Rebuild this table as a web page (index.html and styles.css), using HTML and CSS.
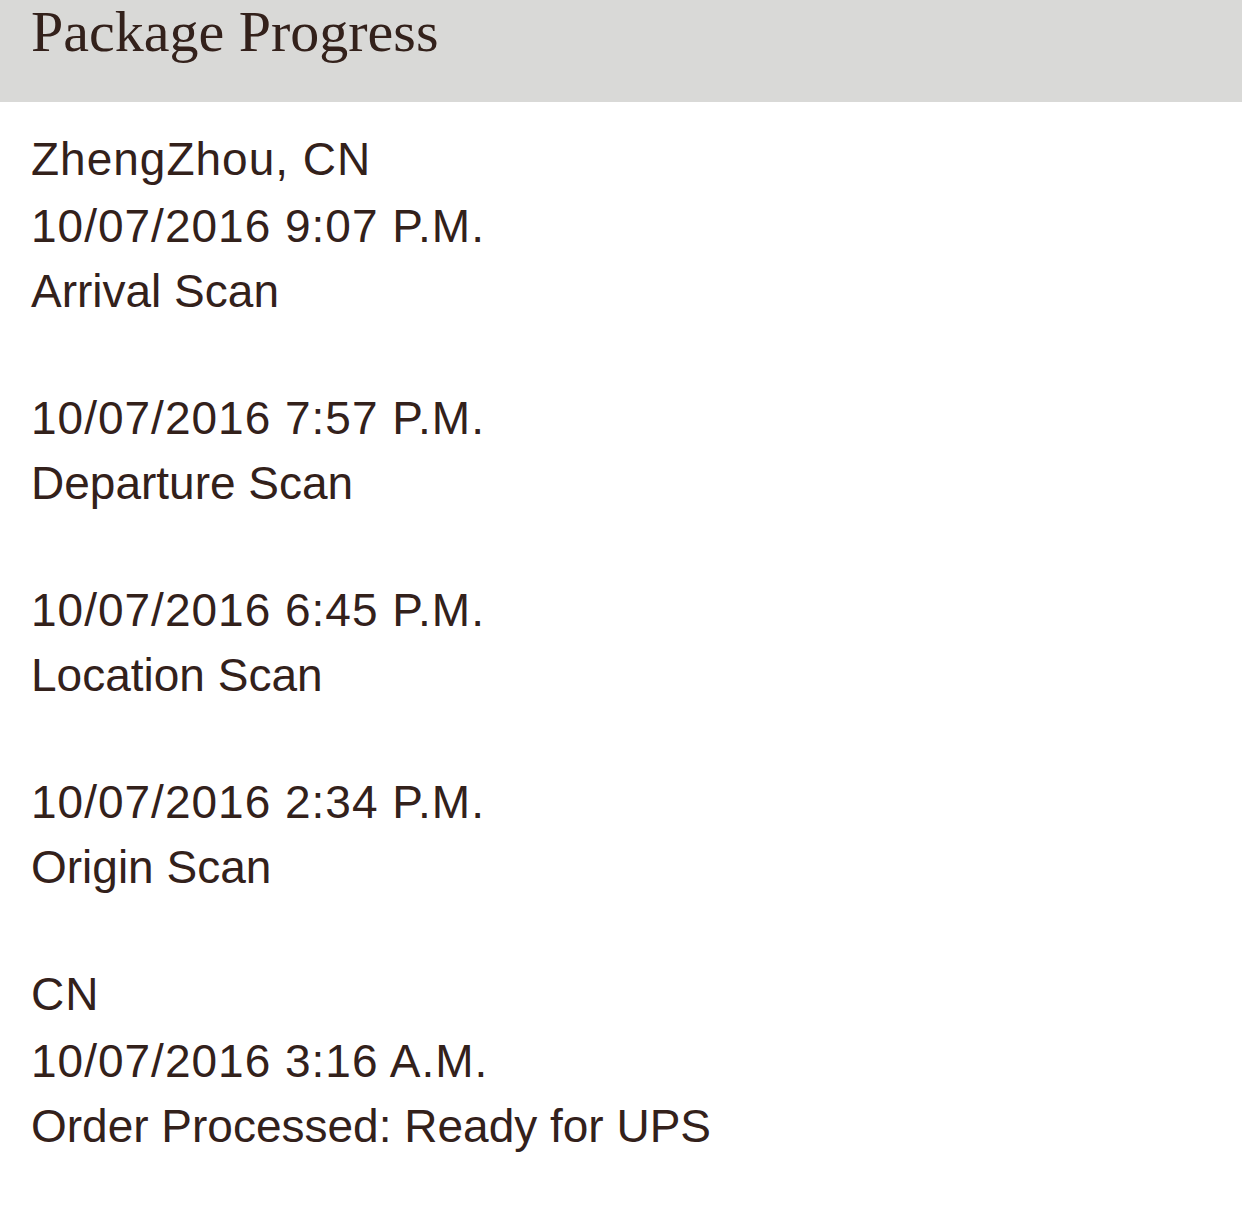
FILE: index.html
```html
<!DOCTYPE html>
<html>
<head>
<meta charset="utf-8">
<link rel="stylesheet" href="styles.css">
</head>
<body>
<header class="bar"><h1 class="title">Package Progress</h1></header>
<main class="progress">
  <section class="group">
    <div class="loc">ZhengZhou, CN</div>
    <div class="entry"><div class="line date">10/07/2016 9:07 P.M.</div><div class="line">Arrival Scan</div></div>
    <div class="entry"><div class="line date">10/07/2016 7:57 P.M.</div><div class="line">Departure Scan</div></div>
    <div class="entry"><div class="line date">10/07/2016 6:45 P.M.</div><div class="line">Location Scan</div></div>
    <div class="entry"><div class="line date">10/07/2016 2:34 P.M.</div><div class="line">Origin Scan</div></div>
  </section>
  <section class="group">
    <div class="loc">CN</div>
    <div class="entry"><div class="line date">10/07/2016 3:16 A.M.</div><div class="line">Order Processed: Ready for UPS</div></div>
  </section>
</main>
</body>
</html>
```
FILE: styles.css
```css
html, body {
  margin: 0;
  padding: 0;
  background: #ffffff;
}
body {
  color: #33211b;
  font-family: "Liberation Sans", Arial, sans-serif;
}
.bar {
  background: #d9d9d7;
  height: 102px;
  padding-left: 31px;
  box-sizing: border-box;
}
.title {
  margin: 0;
  font-family: "Liberation Serif", "Times New Roman", serif;
  font-weight: normal;
  font-size: 58px;
  line-height: 64px;
  color: #33211b;
}
.progress {
  padding: 25px 31px 0;
  font-size: 46px;
  line-height: 65px;
}
.group {
  margin-bottom: 62px;
}
.loc {
  margin-bottom: 2px;
  letter-spacing: 1px;
}
.entry + .entry {
  margin-top: 62px;
}
.line {
  white-space: nowrap;
}
.date {
  letter-spacing: 1px;
}
```
